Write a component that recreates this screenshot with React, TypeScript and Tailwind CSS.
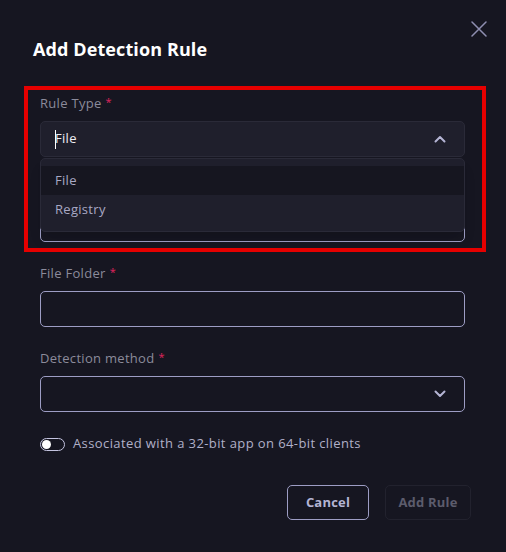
import { useState } from 'react';

const font = { fontFamily: '"Open Sans", "Liberation Sans", sans-serif' };

const FieldLabel: React.FC<{ title: string }> = ({ title }) => (
  <div className="h-[18px] mb-[9px] flex items-center text-[13px] tracking-[0.3px] text-[#8b8b9b] leading-none">
    {title}
    <span className="ml-[4px] text-[#e0245e] text-[11px] -mt-[4px]">*</span>
  </div>
);

const Chevron: React.FC<{ up?: boolean }> = ({ up }) => (
  <svg width="12" height="8" viewBox="0 0 12 8" fill="none">
    <path
      d={up ? 'M1.5 6.5 L6 2 L10.5 6.5' : 'M1.5 1.5 L6 6 L10.5 1.5'}
      stroke="#b4b4d4"
      strokeWidth="2"
      strokeLinecap="round"
      strokeLinejoin="round"
    />
  </svg>
);

export default function App() {
  const [on, setOn] = useState(false);
  const options = ['File', 'Registry'];

  return (
    <div
      className="relative w-[506px] h-[552px] bg-[#161621] overflow-hidden px-[33px]"
      style={font}
    >
      {/* close */}
      <button className="absolute top-[21px] right-[19px] w-[16px] h-[16px] flex items-center justify-center">
        <svg width="16" height="16" viewBox="0 0 16 16" fill="none">
          <path d="M1 1 L15 15 M15 1 L1 15" stroke="#8e8eb0" strokeWidth="1.5" strokeLinecap="round" />
        </svg>
      </button>

      <h2 className="pt-[37px] h-[61px] text-[18px] leading-[24px] font-bold text-white tracking-[0.1px]">
        Add Detection Rule
      </h2>

      <div className="pl-[7px] pr-[8px] mt-[33px]">
        {/* rule type */}
        <div className="relative">
          <FieldLabel title="Rule Type" />
          <div className="h-[36px] rounded-[5px] bg-[#1f1f2c] border border-[#2a2a38] flex items-center justify-between pl-[14px] pr-[18px]">
            <div className="flex items-center text-[13px] tracking-[0.3px] text-[#eeeef4]">
              <span className="w-px h-[19px] bg-white mr-[-1px]" />
              File
            </div>
            <Chevron up />
          </div>
        </div>

        {/* field hidden under the open menu */}
        <div className="mt-[22px]">
          <div className="h-[18px] mb-[9px]" />
          <div className="h-[36px] rounded-[5px] border border-[#9d9dc4]" />
        </div>

        <div className="mt-[22px]">
          <FieldLabel title="File Folder" />
          <input className="w-full h-[36px] rounded-[5px] border border-[#9d9dc4] bg-transparent outline-none" />
        </div>

        <div className="mt-[22px]">
          <FieldLabel title="Detection method" />
          <div className="h-[36px] rounded-[5px] border border-[#9d9dc4] flex items-center justify-end pr-[18px]">
            <Chevron />
          </div>
        </div>

        <div className="mt-[23px] h-[18px] flex items-center gap-[8px]">
          <button
            onClick={() => setOn((v) => !v)}
            className="w-[25px] h-[13px] rounded-full border-[1.5px] border-[#c4c4e0] bg-[#161621] flex items-center px-[1px]"
          >
            <span className="w-[9px] h-[9px] rounded-full bg-white" />
          </button>
          <span className="text-[13px] tracking-[0.4px] text-[#b0b0c8]">
            Associated with a 32-bit app on 64-bit clients
          </span>
        </div>
      </div>

      <div className="mt-[32px] flex justify-end gap-[16px] pr-[2px]">
        <button className="w-[82px] h-[35px] rounded-[5px] border border-[#9d9dc4] text-[13px] tracking-[0.2px] font-bold text-[#b4b4d4]">
          Cancel
        </button>
        <button className="w-[86px] h-[35px] rounded-[5px] border border-[#22222e] text-[13px] tracking-[0.2px] font-bold text-[#5c5c6c]">
          Add Rule
        </button>
      </div>

      {/* open menu */}
      <div className="absolute left-[40px] top-[158px] w-[425px] rounded-[5px] bg-[#1f1f2c] border border-[#2a2a38] pt-[7px] pb-[7px] shadow-lg">
        {options.map((o, i) => (
          <div
            key={o}
            className={`h-[29px] flex items-center pl-[14px] text-[13px] tracking-[0.3px] text-[#a8a8c4] ${i === 0 ? 'bg-[#161620]' : ''}`}
          >
            {o}
          </div>
        ))}
      </div>

      {/* highlight */}
      <div className="absolute left-[24px] top-[86px] w-[462px] h-[166px] border-4 border-[#e60000] pointer-events-none" />
    </div>
  );
}
